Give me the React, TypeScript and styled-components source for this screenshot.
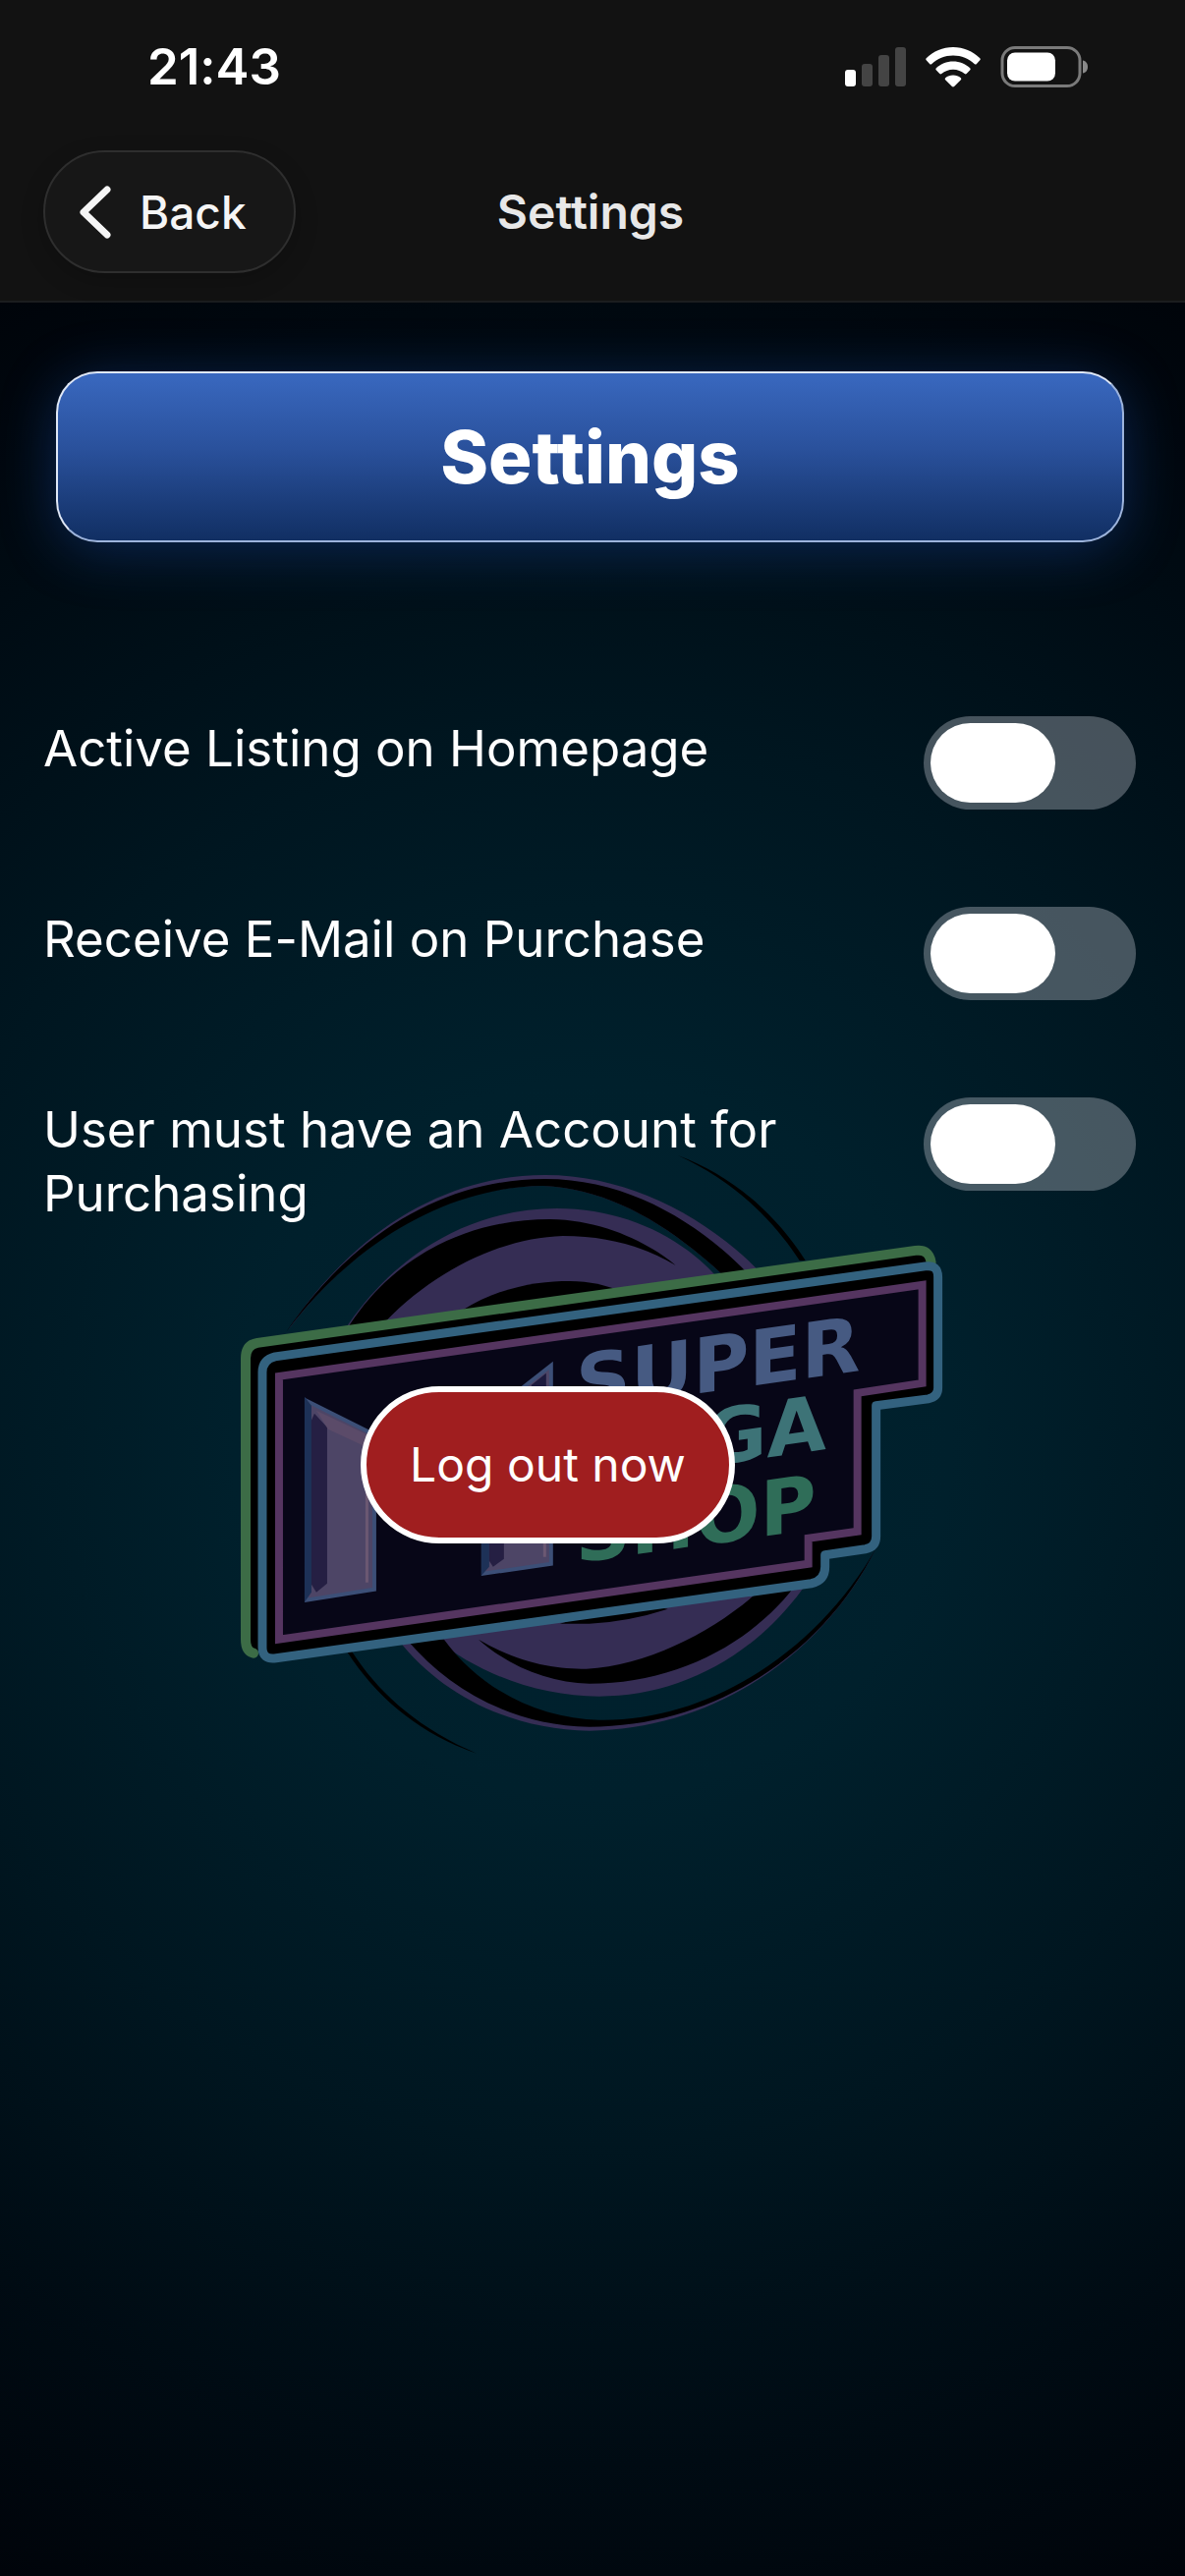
import React, { useState } from 'react';
import styled, { createGlobalStyle } from 'styled-components';

const GlobalStyle = createGlobalStyle`
  * {
    box-sizing: border-box;
  }
  html, body, #root {
    min-height: 100vh;
    margin: 0;
  }
  body {
    background: #00040a;
    color: #ffffff;
    font-family: Inter, "Liberation Sans", sans-serif;
    font-variant-ligatures: none;
  }
  button, input {
    font-family: inherit;
  }
`;

const Page = styled.div`
  display: flex;
  flex-direction: column;
  min-height: 100vh;
`;

const Header = styled.header`
  background: #121212;
  border-bottom: 2px solid #1b1d1f;
`;

const StatusBar = styled.div`
  display: flex;
  align-items: center;
  justify-content: space-between;
  height: 136px;
  padding: 0 98px 0 150px;
`;

const Time = styled.time`
  font-size: 51px;
  font-weight: 600;
  line-height: 60px;
`;

const StatusIcons = styled.div`
  display: flex;
  align-items: center;
  gap: 20px;
`;

const NavBar = styled.nav`
  display: grid;
  grid-template-columns: 1fr auto 1fr;
  align-items: center;
  padding: 17px 48px 28px 44px;
`;

const BackButton = styled.button`
  display: flex;
  align-items: center;
  justify-self: start;
  gap: 28px;
  height: 125px;
  padding: 0 48px 0 34px;
  border: 2px solid #2e2e2e;
  border-radius: 63px;
  background: #171717;
  box-shadow: 0 8px 24px rgba(0, 0, 0, 0.2);
  color: #f5f5f5;
  font-size: 46px;
  font-weight: 500;
  line-height: 60px;
`;

const NavTitle = styled.h1`
  margin: 0;
  color: #e8e8e8;
  font-size: 48px;
  font-weight: 600;
  line-height: 60px;
`;

const Stage = styled.main`
  display: grid;
  flex: 1;
  background: radial-gradient(
    circle at 50% 50%,
    #002330 0%,
    #00202c 28%,
    #001620 55%,
    #000b13 80%,
    #00040a 100%
  );
`;

const Watermark = styled.svg`
  grid-area: 1 / 1;
  place-self: center;
  width: 60%;
`;

const Content = styled.div`
  grid-area: 1 / 1;
  z-index: 1;
`;

const Banner = styled.h2`
  margin: 70px 62px 177px 57px;
  padding: 40px 0;
  border: 2px solid #9db4dc;
  border-top-color: #dfe8f7;
  border-left-color: #dfe8f7;
  border-radius: 42px;
  background: linear-gradient(#3968bf, #2a519c 45%, #112f63);
  box-shadow: 0 8px 56px rgba(24, 70, 160, 0.45);
  font-size: 74px;
  font-weight: 800;
  line-height: 90px;
  text-align: center;
`;

const SettingList = styled.ul`
  display: flex;
  flex-direction: column;
  gap: 99px;
  margin: 0;
  padding: 0 50px 0 44px;
  list-style: none;
`;

const SettingRow = styled.li`
  display: flex;
  align-items: flex-start;
  justify-content: space-between;
  gap: 60px;
`;

const SettingLabel = styled.label`
  font-size: 51px;
  line-height: 65px;
`;

const Toggle = styled.input`
  appearance: none;
  flex: none;
  width: 216px;
  height: 95px;
  margin: 0;
  padding: 7px;
  border-radius: 48px;
  background: ${(props) => (props.checked ? '#34c759' : 'rgba(168, 174, 184, 0.42)')};

  &::before {
    content: '';
    display: block;
    width: 127px;
    height: 81px;
    margin-left: ${(props) => (props.checked ? '75px' : '0')};
    border-radius: 41px;
    background: #ffffff;
  }
`;

const Actions = styled.div`
  display: flex;
  justify-content: center;
  margin-top: 164px;
  padding-right: 91px;
`;

const LogoutButton = styled.button`
  padding: 42px 44px;
  border: 6px solid #ffffff;
  border-radius: 80px;
  background: #a01e1f;
  color: #ffffff;
  font-size: 48px;
  line-height: 64px;
`;

const LogoText = styled.text`
  font-family: 'DejaVu Sans', sans-serif;
  font-size: 78px;
  font-weight: 700;
`;

const SignalIcon = () => (
  <svg width="62" height="40" viewBox="0 0 62 40" aria-hidden="true">
    <rect x="0" y="23" width="11" height="17" rx="3" fill="#fff" />
    <rect x="17" y="17" width="11" height="23" rx="3" fill="#444" />
    <rect x="34" y="8" width="11" height="32" rx="3" fill="#444" />
    <rect x="51" y="0" width="11" height="40" rx="3" fill="#444" />
  </svg>
);

const WifiIcon = () => (
  <svg width="56" height="42" viewBox="0 0 56 42" fill="#fff" aria-hidden="true">
    <path d="M28 1C38.500 1 48 5 55.300 12.200Q56.200 13.200 55.300 14.200L51.700 18.200Q50.800 19 49.900 18.200C44 12.500 36.500 9.500 28 9.500S12 12.500 6.100 18.200Q5.200 19 4.300 18.200L.7 14.200Q-.2 13.200.7 12.200C8 5 17.500 1 28 1Z" />
    <path d="M28 15.500C34.600 15.500 40.600 18 45.200 22.200Q46.200 23.200 45.300 24.200L41.700 28Q40.700 28.900 39.700 28C36.500 25.300 32.500 23.700 28 23.700S19.500 25.300 16.300 28Q15.300 28.900 14.300 28L10.700 24.200Q9.800 23.200 10.800 22.200C15.400 18 21.400 15.500 28 15.500Z" />
    <path d="M28 29.500C31 29.500 33.600 30.500 35.800 32.200Q36.900 33.200 35.900 34.200L29.100 41.100Q28 42 26.900 41.100L20.100 34.200Q19.100 33.200 20.200 32.200C22.400 30.500 25 29.500 28 29.500Z" />
  </svg>
);

const BatteryIcon = () => (
  <svg width="90" height="42" viewBox="0 0 90 42" aria-hidden="true">
    <rect x="2" y="1.500" width="79" height="39" rx="13" fill="none" stroke="#7a7a7a" strokeWidth="3" />
    <rect x="7" y="6.500" width="49" height="29" rx="8" fill="#fff" />
    <path d="M84 14.500C87 15 89 17.500 89 21S87 27 84 27.500Z" fill="#8a8a8a" />
  </svg>
);

const BackIcon = () => (
  <svg width="34" height="56" viewBox="0 0 34 56" aria-hidden="true">
    <path d="M29 5L5 28L29 51" fill="none" stroke="#f5f5f5" strokeWidth="7" strokeLinecap="round" strokeLinejoin="round" />
  </svg>
);

const Logo = () => (
  <Watermark viewBox="241 1139 724 651" role="img" aria-label="Super Mega Shop">
    {/* swirl */}
    <path
      fill="#352d54"
      d="M340 1370C395 1275 480 1229 567 1229C640 1229 700 1262 735 1305L850 1560C800 1670 705 1726 610 1726C550 1726 490 1705 440 1665Z"
    />
    <path
      fill="#000"
      d="M352 1354C400 1275 480 1240 560 1240C615 1241 660 1264 688 1287C655 1268 620 1257 573 1257C510 1259 440 1292 385 1352Z"
    />
    <path fill="#000" d="M470 1333C510 1308 550 1303 580 1303C600 1303 618 1307 632 1314L620 1360Z" />
    <path
      fill="#000"
      d="M487 1668C530 1693 565 1698 597 1698C665 1694 735 1655 780 1612L815 1606C770 1670 690 1713 600 1713C560 1712 520 1697 487 1668Z"
    />
    <path fill="#000" d="M570 1652L600 1652Q640 1650 680 1637L640 1630Z" />
    <path
      fill="#352d54"
      d="M293 1353C365 1245 460 1195 555 1195C640 1195 720 1238 775 1295L735 1296C680 1245 620 1209 553 1206C460 1206 365 1258 293 1353Z"
    />
    <path
      fill="#000"
      d="M291 1355C365 1247 460 1199 555 1199C640 1199 712 1244 762 1296L735 1296C680 1245 620 1209 553 1206C460 1207 365 1258 291 1355Z"
    />
    <path
      fill="#352d54"
      d="M405 1668C450 1725 520 1760 600 1761C730 1760 840 1680 892 1575C835 1680 725 1754 610 1752C550 1751 490 1720 450 1668Z"
    />
    <path
      fill="#000"
      d="M414 1668C460 1722 525 1756 600 1757C730 1757 840 1680 892 1575C835 1676 725 1752 610 1750C550 1749 490 1720 452 1668Z"
    />
    <path fill="#000" d="M690 1175C745 1195 790 1235 820 1282L814 1282C785 1238 745 1200 690 1175Z" />
    <path fill="#000" d="M358 1680C385 1722 425 1758 485 1784C430 1765 385 1730 353 1680Z" />

    {/* plate */}
    <g strokeLinejoin="round">
      <path
        fill="#000"
        stroke="#3c6c46"
        strokeWidth="10"
        strokeLinecap="round"
        d="M258 1682Q250 1680 250 1668V1382Q250 1368 262 1366L932 1272Q946 1270 948 1284"
      />
      <path
        fill="#000"
        stroke="#33627f"
        strokeWidth="9"
        d="M267 1396Q267 1383 280 1380L942 1288Q955 1286 955 1299V1412Q955 1421 945 1423L892 1430V1563Q892 1574 881 1576L840 1582V1594Q840 1608 826 1611L281 1687Q267 1689 267 1676Z"
      />
      <path
        fill="#070617"
        stroke="#553560"
        strokeWidth="8"
        strokeLinejoin="miter"
        d="M284 1400L939 1307V1407L873 1417V1558L823 1565V1591L284 1668Z"
      />
    </g>

    {/* bevelled M */}
    <path fill="#4d4566" stroke="#3c4f77" strokeWidth="4" d="M312 1425L436 1487L561 1389V1591L492 1601V1500L436 1540L381 1500V1617L312 1628Z" />
    <path fill="#1d3157" d="M310 1421L317 1430V1620L310 1630Z" />
    <path fill="#251f43" d="M320 1438L333 1452V1611L322 1620L317 1612V1445Z" />
    <path fill="#5b4b69" d="M322 1435L379 1462V1475L334 1454Z" />
    <path fill="#6b5872" d="M372 1480H375V1610H372Z" />
    <path fill="#1d3157" d="M490 1500H498V1594L490 1603Z" />
    <path fill="#251f43" d="M498 1540H513V1586L502 1594L498 1588Z" />
    <path fill="#6b5872" d="M553 1500H556V1584H553Z" />
    <path fill="#1c1a3d" d="M541 1409L556 1397V1411H541Z" />

    <g transform="translate(586 1435) skewY(-8)">
      <LogoText fill="#465a82">SUPER</LogoText>
    </g>
    <g transform="translate(586 1510) skewY(-8)">
      <LogoText fill="#3d7377">MEGA</LogoText>
    </g>
    <g transform="translate(586 1590) skewY(-8)">
      <LogoText fill="#2f6d58">SHOP</LogoText>
    </g>
  </Watermark>
);

const settings = [
  { id: 'active-listing', label: 'Active Listing on Homepage' },
  { id: 'purchase-mail', label: 'Receive E-Mail on Purchase' },
  { id: 'account-required', label: 'User must have an Account for Purchasing' },
];

const App: React.FunctionComponent = () => {
  const [enabled, setEnabled] = useState<Record<string, boolean>>({});

  return (
    <Page>
      <GlobalStyle />
      <Header>
        <StatusBar>
          <Time>21:43</Time>
          <StatusIcons>
            <SignalIcon />
            <WifiIcon />
            <BatteryIcon />
          </StatusIcons>
        </StatusBar>
        <NavBar>
          <BackButton type="button">
            <BackIcon />
            Back
          </BackButton>
          <NavTitle>Settings</NavTitle>
        </NavBar>
      </Header>
      <Stage>
        <Logo />
        <Content>
          <Banner>Settings</Banner>
          <SettingList>
            {settings.map(({ id, label }) => (
              <SettingRow key={id}>
                <SettingLabel htmlFor={id}>{label}</SettingLabel>
                <Toggle
                  id={id}
                  type="checkbox"
                  role="switch"
                  checked={!!enabled[id]}
                  onChange={(e) => setEnabled({ ...enabled, [id]: e.target.checked })}
                />
              </SettingRow>
            ))}
          </SettingList>
          <Actions>
            <LogoutButton type="button">Log out now</LogoutButton>
          </Actions>
        </Content>
      </Stage>
    </Page>
  );
};

export default App;
